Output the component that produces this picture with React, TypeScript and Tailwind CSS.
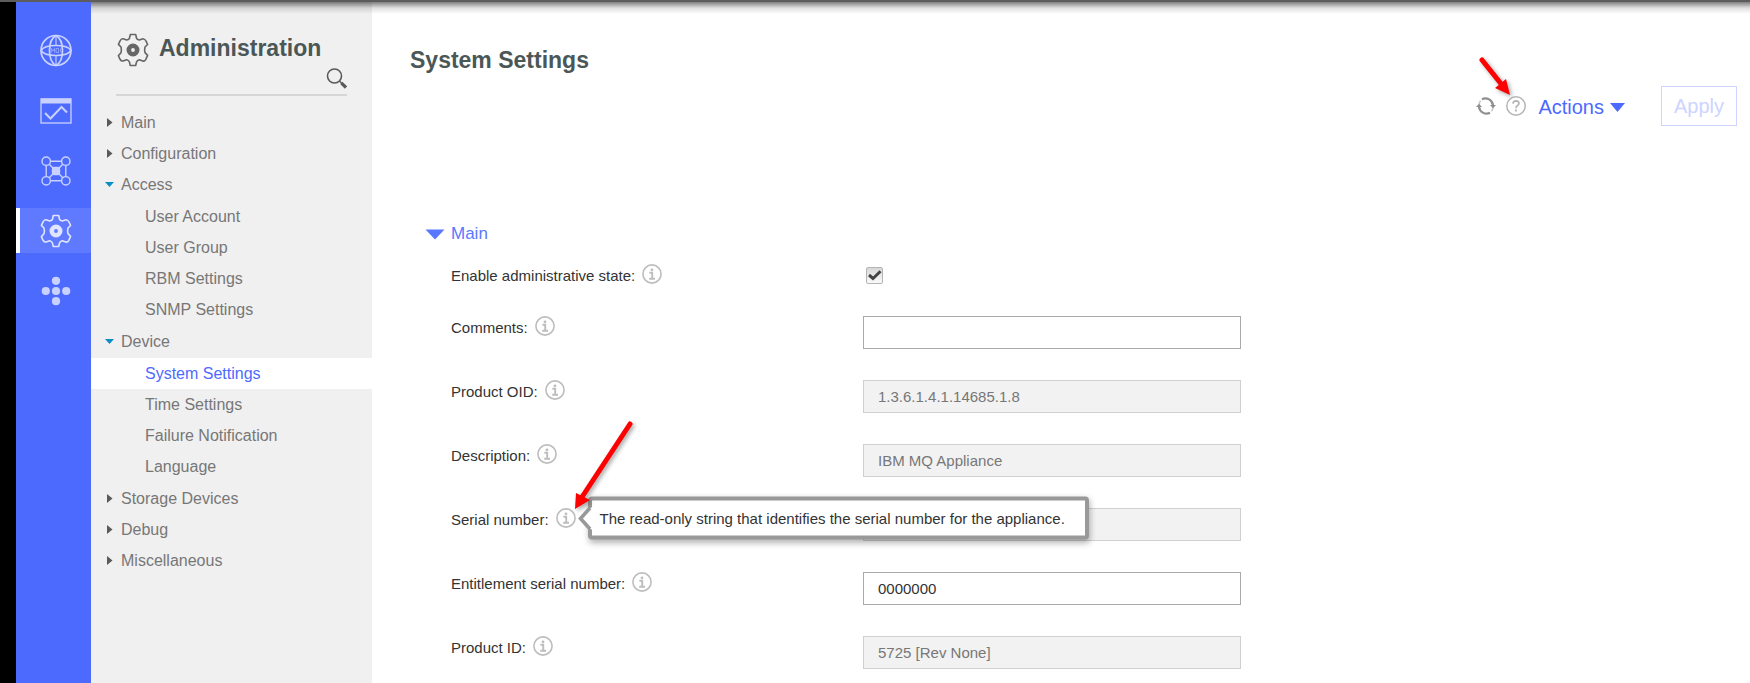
import React from "react";

type IconProps = { className?: string };

function GearIcon({ className }: IconProps) {
  return (
    <svg viewBox="0 0 32 34" className={className} fill="none" stroke="currentColor" aria-hidden="true">
      <path
        strokeWidth="1.6"
        strokeLinejoin="round"
        d="M13.3 1.5 H18.7 L19.6 5.5 Q20.6 6.8 22.3 7 L26 5.8 Q28 6 29.2 8.4 L30.6 11.5 L28 14 Q27.2 17 28 19.6 L30.6 22.4 L28.7 26.6 Q27.5 28.6 25.8 28 L22.3 26.8 Q20.2 27.4 19.5 29 L18.7 32.5 H13.3 L12.4 29 Q11.6 27.2 9.7 26.8 L6 28 Q4.4 28.4 3 26.2 L1.4 22.6 L4 19.8 Q4.8 17 4 14 L1.4 11.4 L3.2 7.6 Q4.6 5.6 6 5.8 L9.7 7 Q11.4 6.9 12.4 5.5 Z"
      />
      <circle cx="16" cy="17" r="4.2" strokeWidth="4.6" />
    </svg>
  );
}

function GlobeIcon({ className }: IconProps) {
  return (
    <svg viewBox="0 0 32 34" className={className} fill="none" stroke="currentColor" strokeWidth="1.7" aria-hidden="true">
      <circle cx="16" cy="16.5" r="15" />
      <path d="M16 1.5 Q9.5 5 9.5 16.5 Q9.5 28 16 31.5 Q22.5 28 22.5 16.5 Q22.5 5 16 1.5" />
      <path d="M1 16.5 Q4 11.5 16 11.5 Q28 11.5 31 16.5 Q28 21.5 16 21.5 Q4 21.5 1 16.5" />
      <path d="M16 1.5 V11 M16 22 V31.5" strokeWidth="1.1" />
      <path d="M11.5 18.5 V14.5 L13 17 L14.5 14.5 V18.5 M16 14.5 H18.5 V18.5 H16 Z M20.5 14.5 V18.5" strokeWidth="0.7" opacity="0.7" />
    </svg>
  );
}

function MonitorIcon({ className }: IconProps) {
  return (
    <svg viewBox="0 0 32 26" className={className} fill="none" stroke="currentColor" aria-hidden="true">
      <rect x="1" y="1" width="30" height="24" strokeWidth="1.3" />
      <rect x="1" y="0.5" width="30" height="5" fill="currentColor" stroke="none" />
      <path d="M5 15 L10.5 20.5 L21.5 9 L27 14.5" strokeWidth="2" />
    </svg>
  );
}

function NetworkIcon({ className }: IconProps) {
  return (
    <svg viewBox="0 0 30 30" className={className} fill="none" stroke="currentColor" strokeWidth="1.4" aria-hidden="true">
      <circle cx="5.2" cy="5.2" r="4.2" />
      <circle cx="24.8" cy="5.2" r="4.2" />
      <circle cx="5.2" cy="24.8" r="4.2" />
      <circle cx="24.8" cy="24.8" r="4.2" />
      <path d="M9.5 5.2 H20.5 M9.5 24.8 H20.5 M5.2 9.5 V20.5 M24.8 9.5 V20.5 M8.2 8.2 L21.8 21.8 M21.8 8.2 L8.2 21.8" />
      <rect x="11.5" y="11.5" width="7" height="7" rx="1.5" fill="currentColor" />
    </svg>
  );
}

function DotsIcon({ className }: IconProps) {
  return (
    <svg viewBox="0 0 30 30" className={className} fill="currentColor" aria-hidden="true">
      <circle cx="15" cy="4.8" r="4.1" />
      <circle cx="4.8" cy="15" r="4.1" />
      <circle cx="15" cy="15" r="4.1" />
      <circle cx="25.2" cy="15" r="4.1" />
      <circle cx="15" cy="25.2" r="4.1" />
    </svg>
  );
}

function SearchIcon({ className }: IconProps) {
  return (
    <svg viewBox="0 0 22 22" className={className} fill="none" stroke="currentColor" aria-hidden="true">
      <circle cx="9.5" cy="8" r="7" strokeWidth="1.6" />
      <path d="M14.5 13 L16.5 15" strokeWidth="1.4" />
      <path d="M16.3 14.8 L21 19.5" strokeWidth="3.2" />
    </svg>
  );
}

function InfoIcon({ className }: IconProps) {
  return (
    <svg viewBox="0 0 20 20" className={className} fill="none" stroke="currentColor" aria-hidden="true">
      <circle cx="10" cy="10" r="9.1" strokeWidth="1.6" />
      <circle cx="10" cy="5.8" r="1.4" fill="currentColor" stroke="none" />
      <path d="M7.4 8.8 H10.2 V14.6 M7.2 14.8 H13" strokeWidth="1.9" />
    </svg>
  );
}

function HelpIcon({ className }: IconProps) {
  return (
    <svg viewBox="0 0 20 20" className={className} fill="none" stroke="currentColor" aria-hidden="true">
      <circle cx="10" cy="10" r="9.2" strokeWidth="1.5" />
      <path d="M7 7.6 Q7.1 4.8 10 4.8 Q13 4.9 13 7.5 Q12.9 8.8 11.3 9.8 Q10 10.6 10 12.2" strokeWidth="1.7" />
      <path d="M10 13.6 V15.5" strokeWidth="1.9" />
    </svg>
  );
}

function RefreshIcon({ className }: IconProps) {
  return (
    <svg viewBox="0 0 20 20" className={className} fill="none" stroke="currentColor" aria-hidden="true">
      <path d="M6 3.2 A7.6 7.6 0 0 1 17 9.5 M14 16.8 A7.6 7.6 0 0 1 3 10.5" strokeWidth="2.2" />
      <path d="M3 11 A7.6 7.6 0 0 1 4.5 4.8 M17 9 A7.6 7.6 0 0 1 15.6 15.2" strokeWidth="1.6" opacity="0.5" />
      <path d="M14 9 H20 L17 12.2 Z M0 11 H6 L3 7.8 Z" fill="currentColor" stroke="none" />
    </svg>
  );
}

const rail = [
  { label: "MQ Console", Icon: GlobeIcon, size: "h-[34px] w-8", active: false },
  { label: "Monitoring", Icon: MonitorIcon, size: "h-[26px] w-8", active: false },
  { label: "Network", Icon: NetworkIcon, size: "size-[30px]", active: false },
  { label: "Administration", Icon: GearIcon, size: "h-[34px] w-8", active: true },
  { label: "More", Icon: DotsIcon, size: "size-[30px]", active: false },
];

const menu: { label: string; children?: string[] }[] = [
  { label: "Main" },
  { label: "Configuration" },
  { label: "Access", children: ["User Account", "User Group", "RBM Settings", "SNMP Settings"] },
  { label: "Device", children: ["System Settings", "Time Settings", "Failure Notification", "Language"] },
  { label: "Storage Devices" },
  { label: "Debug" },
  { label: "Miscellaneous" },
];

const fields = [
  { id: "comments", label: "Comments:", value: "", readOnly: false },
  { id: "oid", label: "Product OID:", value: "1.3.6.1.4.1.14685.1.8", readOnly: true },
  { id: "description", label: "Description:", value: "IBM MQ Appliance", readOnly: true },
  {
    id: "serial",
    label: "Serial number:",
    value: "",
    readOnly: true,
    tip: "The read-only string that identifies the serial number for the appliance.",
  },
  { id: "entitlement", label: "Entitlement serial number:", value: "0000000", readOnly: false },
  { id: "product", label: "Product ID:", value: "5725 [Rev None]", readOnly: true },
];

function Rail() {
  return (
    <nav aria-label="Sections" className="flex w-[75px] shrink-0 flex-col gap-[15px] bg-[#4d6aff] pt-7 text-[#c9d2ff]">
      {rail.map(({ label, Icon, size, active }) => (
        <button
          key={label}
          type="button"
          aria-label={label}
          className={
            active
              ? "flex h-[45px] items-center justify-center border-l-4 border-white bg-[#5f79ff] text-[#dfe4ff]"
              : "flex h-[45px] items-center justify-center pl-1"
          }
        >
          <Icon className={size} />
        </button>
      ))}
    </nav>
  );
}

function Sidebar() {
  return (
    <aside className="w-[281px] shrink-0 bg-[#f0f0f0]">
      <header className="px-[25px] pt-8">
        <div className="flex h-9 items-center gap-[10px] pl-px">
          <GearIcon className="h-[34px] w-8 text-[#666]" />
          <h2 className="pb-1 text-[23px] leading-7 font-bold text-[#4b5757]">Administration</h2>
        </div>
        <div className="flex h-7 justify-end border-b-2 border-[#d6d6d6]">
          <button type="button" aria-label="Search" className="h-[22px] text-[#5a5a5a]">
            <SearchIcon className="size-[22px]" />
          </button>
        </div>
      </header>
      <ul className="pt-[11px] text-[16px] leading-[31px] text-[#777]">
        {menu.map((item) => (
          <li key={item.label}>
            <a href="#" className="flex items-center pl-[14px]">
              <span className="flex w-4 items-center">
                {item.children ? (
                  <svg viewBox="0 0 9 5" className="h-[5px] w-[9px]" aria-hidden="true">
                    <path d="M0 0 H9 L4.5 5 Z" fill="#0a8fc4" />
                  </svg>
                ) : (
                  <svg viewBox="0 0 8 9" className="h-[9px] w-2" aria-hidden="true">
                    <path d="M2 0 L7.5 4.5 L2 9 Z" fill="#5a5a5a" />
                  </svg>
                )}
              </span>
              {item.label}
            </a>
            {item.children && (
              <ul className="py-px">
                {item.children.map((child) => (
                  <li key={child}>
                    <a
                      href="#"
                      className={child === "System Settings" ? "block bg-white pl-[54px] text-[#4d6aff]" : "block pl-[54px]"}
                    >
                      {child}
                    </a>
                  </li>
                ))}
              </ul>
            )}
          </li>
        ))}
      </ul>
    </aside>
  );
}

function Tooltip({ text }: { text: string }) {
  return (
    <span
      role="tooltip"
      className="absolute top-1/2 left-full z-10 ml-3 -translate-y-1/2 rounded border-4 border-[#999] bg-white pr-5 pl-2 leading-[35px] whitespace-nowrap text-[#333] shadow-[1px_3px_6px_rgba(0,0,0,0.3)]"
    >
      {text}
      <svg viewBox="0 0 15 26" className="absolute top-1/2 -left-[14px] h-[26px] w-[15px] -translate-y-1/2" aria-hidden="true">
        <path d="M15 1 L12 3 L2.5 13 L12 23 L15 25 Z" fill="#fff" />
        <path d="M12 2.5 L2.5 13 L12 23.5" fill="none" stroke="#999" strokeWidth="3.6" />
      </svg>
    </span>
  );
}

function Info({ label, tip }: { label: string; tip?: string }) {
  return (
    <span className="relative mb-1 inline-flex">
      <button type="button" aria-label={"About " + label} className="text-[#bdbdbd]">
        <InfoIcon className="size-5" />
      </button>
      {tip && (
        <>
          <Tooltip text={tip} />
          <svg
            viewBox="0 0 64 92"
            className="pointer-events-none absolute bottom-4 left-4 z-20 h-[92px] w-16 drop-shadow-[2px_2px_2px_rgba(0,0,0,0.35)]"
            aria-hidden="true"
          >
            <path d="M58 4 L10 77" stroke="#f00" strokeWidth="5" strokeLinecap="round" />
            <path d="M3 89 L4 73 L18 80 Z" fill="#f00" />
          </svg>
        </>
      )}
    </span>
  );
}

export default function App() {
  return (
    <div className="relative flex min-h-screen bg-white font-['Liberation_Sans',Arial,sans-serif]">
      <div className="w-4 shrink-0 bg-black" />
      <Rail />
      <Sidebar />
      <div className="pointer-events-none absolute inset-x-0 top-0 h-[2px] bg-[#5c5c5c]" />
      <div className="pointer-events-none absolute top-[2px] right-0 left-[91px] h-3 bg-linear-to-b from-black/50 via-black/12 to-transparent" />
      <main className="min-w-0 flex-1 pr-[13px] pl-[38px]">
        <h1 className="pt-[45px] text-[23px] leading-[30px] font-bold text-[#4b5757]">System Settings</h1>
        <div className="mt-[11px] flex items-center justify-end">
          <button type="button" aria-label="Refresh" className="text-[#8f8f8f]">
            <RefreshIcon className="size-5" />
          </button>
          <span className="relative ml-[10px] inline-flex">
            <button type="button" aria-label="Help" className="text-[#b5b5b5]">
              <HelpIcon className="size-5" />
            </button>
            <svg
              viewBox="0 0 34 40"
              className="pointer-events-none absolute right-[14px] bottom-5 h-10 w-[34px] drop-shadow-[2px_2px_2px_rgba(0,0,0,0.35)]"
              aria-hidden="true"
            >
              <path d="M4 4 L24 29" stroke="#f00" strokeWidth="5" strokeLinecap="round" />
              <path d="M32 39 L17 32 L28 23 Z" fill="#f00" />
            </svg>
          </span>
          <button type="button" className="ml-3 flex items-center gap-[6px] pt-[2px] text-[20px] leading-6 text-[#4d6aff]">
            Actions
            <svg viewBox="0 0 15 9" className="h-[9px] w-[15px]" aria-hidden="true">
              <path d="M0 0 H15 L7.5 9 Z" fill="currentColor" />
            </svg>
          </button>
          <button type="button" className="ml-9 h-10 w-[76px] border border-[#ccd4ff] text-[20px] text-[#ccd4ff]">
            Apply
          </button>
        </div>
        <section className="pt-[96px] pl-[15px]">
          <h2>
            <button type="button" className="flex items-center gap-[6px] text-[17px] leading-6 text-[#5a78ff]">
              <svg viewBox="0 0 20 11" className="h-[11px] w-5" aria-hidden="true">
                <path d="M0.5 0.5 H19.5 L10 10.5 Z" fill="currentColor" />
              </svg>
              Main
            </button>
          </h2>
          <form className="pl-[26px] text-[15px] leading-5 text-[#333]">
            <div className="mt-[18px] flex h-[52px] items-start">
              <div className="flex w-[412px] shrink-0 items-center gap-[7px]">
                <label htmlFor="admin-state" className="leading-6">Enable administrative state:</label>
                <Info label="administrative state" />
              </div>
              <span className="relative mt-[3px] ml-[3px] inline-flex size-[17px]">
                <input
                  id="admin-state"
                  type="checkbox"
                  defaultChecked
                  className="size-[17px] appearance-none rounded-[2px] border border-[#b5b5b5] bg-linear-to-b from-[#d8d8d8] to-[#fafafa]"
                />
                <svg viewBox="0 0 17 17" className="pointer-events-none absolute inset-0 size-[17px]" aria-hidden="true">
                  <path d="M3 8 L7 11.5 L14.5 4.2" fill="none" stroke="#444" strokeWidth="3" />
                </svg>
              </span>
            </div>
            <div className="flex flex-col gap-[31px]">
              {fields.map((f) => (
                <div key={f.id} className="flex h-[33px] items-start">
                  <div className="flex w-[412px] shrink-0 items-center gap-[7px]">
                    <label htmlFor={f.id} className="leading-6">{f.label}</label>
                    <Info label={f.label} tip={f.tip} />
                  </div>
                  <input
                    id={f.id}
                    type="text"
                    defaultValue={f.value}
                    readOnly={f.readOnly}
                    className={
                      f.readOnly
                        ? "h-[33px] w-[378px] border border-[#d0d0d0] bg-[#f2f2f2] px-[14px] text-[#777] outline-none"
                        : "h-[33px] w-[378px] border border-[#aaa] bg-white px-[14px] text-[#333] outline-none"
                    }
                  />
                </div>
              ))}
            </div>
          </form>
        </section>
      </main>
    </div>
  );
}
